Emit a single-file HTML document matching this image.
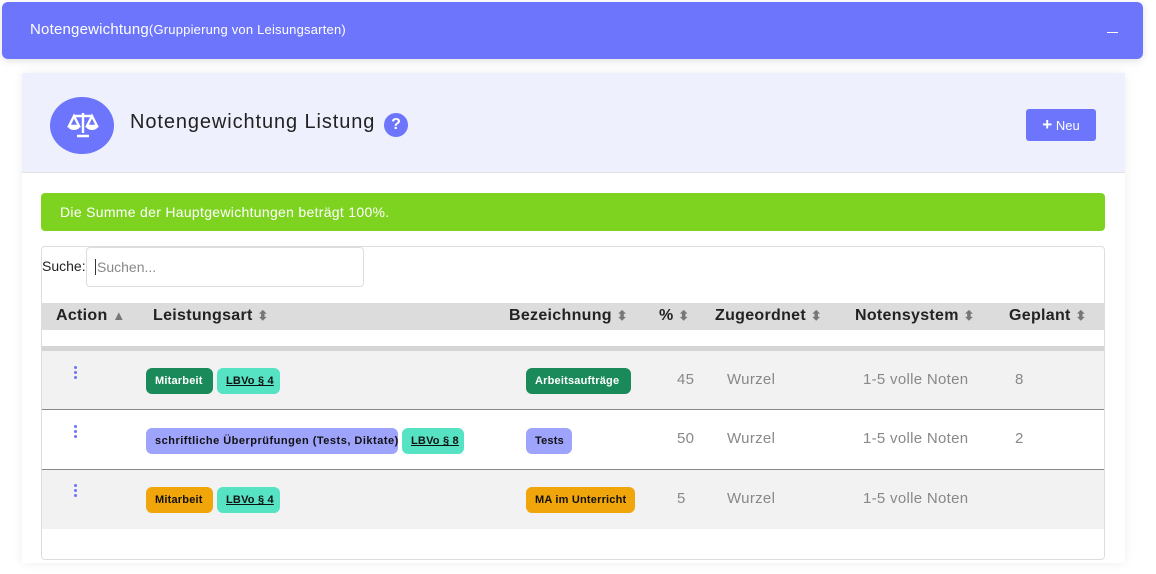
<!DOCTYPE html>
<html><head><meta charset="utf-8"><style>
*{box-sizing:border-box;margin:0;padding:0}
body{width:1156px;height:574px;background:#fff;font-family:"Liberation Sans",sans-serif;position:relative;overflow:hidden}
.abs{position:absolute}
.top{left:2px;top:2px;width:1141px;height:57px;background:#6c75fb;border-radius:6px;color:#fff;box-shadow:0 2px 8px rgba(0,0,0,.12)}
.card{left:22px;top:73px;width:1103px;height:490px;background:#fff;box-shadow:0 0 10px rgba(0,0,0,.07)}
.hd{left:0;top:0;width:1103px;height:100px;background:#eef0fd;border-bottom:1px solid #e3e3e3}
.b{position:absolute;height:26px;line-height:26px;border-radius:6px;font-size:11px;font-weight:bold;padding:0 9px;white-space:nowrap;letter-spacing:.2px}
.g{background:#1b8a5a;color:#fff}.t{background:#55e3c3;color:#111;text-decoration:underline}.p{background:#9ea3fb;color:#111}.o{background:#f0a50a;color:#111}
.v{position:absolute;font-size:15px;color:#888;letter-spacing:.3px}
.th{position:absolute;top:307px;font-size:16px;font-weight:bold;color:#222;letter-spacing:.3px}
.s{color:#777;font-size:13px}
.dots{position:absolute;width:4px}
.dots i{display:block;width:3px;height:3px;border-radius:50%;background:#6c75fb;margin-bottom:2px}
</style></head><body>
<div class="abs top"><span class="abs" style="left:28px;top:19px;font-size:15px;letter-spacing:.2px">Notengewichtung<span style="font-size:13px">(Gruppierung von Leisungsarten)</span></span>
<span class="abs" style="left:1105px;top:30px;width:11px;height:1px;background:#fff"></span></div>
<div class="abs card"><div class="abs hd"></div></div>
<div class="abs" style="left:50px;top:97px;width:64px;height:57px;border-radius:50%;background:#6c75fb"></div>
<svg class="abs" style="left:66px;top:110px" width="34" height="30" viewBox="0 0 34 30"><g fill="none" stroke="#fff" stroke-width="2.4"><path d="M17 3v20M8 6h18M11 26h12"/><path d="M8 6l-5 10h10zM26 6l-5 10h10z"/></g><path d="M2 16h12a6 4 0 0 1-12 0zM20 16h12a6 4 0 0 1-12 0z" fill="#fff"/></svg>
<div class="abs" style="left:130px;top:111px;font-size:20px;color:#222;letter-spacing:.9px">Notengewichtung Listung</div>
<div class="abs" style="left:384px;top:113px;width:24px;height:24px;border-radius:50%;background:#6c75fb;color:#fff;font-weight:bold;font-size:16px;text-align:center;line-height:24px">?</div>
<div class="abs" style="left:1026px;top:109px;width:70px;height:32px;border-radius:3px;background:#6c75fb;color:#fff;font-size:13px;line-height:32px;text-align:center"><b style="font-size:17px">+</b> Neu</div>
<div class="abs" style="left:41px;top:193px;width:1064px;height:38px;border-radius:4px;background:#7ed321;color:#fff;font-size:14px;line-height:38px;padding-left:19px;letter-spacing:.3px">Die Summe der Hauptgewichtungen beträgt 100%.</div>
<div class="abs" style="left:41px;top:246px;width:1064px;height:314px;border:1px solid #ddd;border-radius:4px"></div>
<div class="abs" style="left:42px;top:258px;font-size:14px;color:#222">Suche:</div>
<div class="abs" style="left:86px;top:247px;width:278px;height:40px;border:1px solid #ddd;border-radius:4px;font-size:14px;color:#888;line-height:38px;padding-left:8px"><span style="border-left:1px solid #333;padding-left:1px">Suchen...</span></div>
<div class="abs" style="left:42px;top:303px;width:1062px;height:27px;background:#dcdcdc"></div>
<div class="abs" style="left:42px;top:346px;width:1062px;height:5px;background:#d5d5d5"></div>
<div class="abs" style="left:42px;top:351px;width:1062px;height:59px;background:#f2f2f2;border-bottom:1px solid #888"></div>
<div class="abs" style="left:42px;top:410px;width:1062px;height:60px;background:#fff;border-bottom:1px solid #888"></div>
<div class="abs" style="left:42px;top:470px;width:1062px;height:59px;background:#f2f2f2"></div>
<div class="th" style="left:56px">Action <span class="s">▲</span></div>
<div class="th" style="left:153px">Leistungsart <span class="s">⬍</span></div>
<div class="th" style="left:509px">Bezeichnung <span class="s">⬍</span></div>
<div class="th" style="left:659px">% <span class="s">⬍</span></div>
<div class="th" style="left:715px">Zugeordnet <span class="s">⬍</span></div>
<div class="th" style="left:855px">Notensystem <span class="s">⬍</span></div>
<div class="th" style="left:1009px">Geplant <span class="s">⬍</span></div>
<div class="dots" style="left:74px;top:366px"><i></i><i></i><i></i></div>
<div class="dots" style="left:74px;top:425px"><i></i><i></i><i></i></div>
<div class="dots" style="left:74px;top:484px"><i></i><i></i><i></i></div>
<div class="b g" style="left:146px;top:368px;width:67px">Mitarbeit</div><div class="b t" style="left:217px;top:368px;width:63px">LBVo § 4</div>
<div class="b g" style="left:526px;top:368px;width:105px">Arbeitsaufträge</div>
<div class="b p" style="left:146px;top:428px;width:252px;letter-spacing:.5px">schriftliche Überprüfungen (Tests, Diktate)</div><div class="b t" style="left:402px;top:428px;width:62px">LBVo § 8</div>
<div class="b p" style="left:526px;top:428px;width:46px">Tests</div>
<div class="b o" style="left:146px;top:487px;width:67px">Mitarbeit</div><div class="b t" style="left:217px;top:487px;width:63px">LBVo § 4</div>
<div class="b o" style="left:526px;top:487px;width:109px">MA im Unterricht</div>
<div class="v" style="left:677px;top:371px">45</div><div class="v" style="left:727px;top:371px">Wurzel</div><div class="v" style="left:863px;top:371px">1-5 volle Noten</div><div class="v" style="left:1015px;top:371px">8</div>
<div class="v" style="left:677px;top:430px">50</div><div class="v" style="left:727px;top:430px">Wurzel</div><div class="v" style="left:863px;top:430px">1-5 volle Noten</div><div class="v" style="left:1015px;top:430px">2</div>
<div class="v" style="left:677px;top:490px">5</div><div class="v" style="left:727px;top:490px">Wurzel</div><div class="v" style="left:863px;top:490px">1-5 volle Noten</div>
</body></html>
